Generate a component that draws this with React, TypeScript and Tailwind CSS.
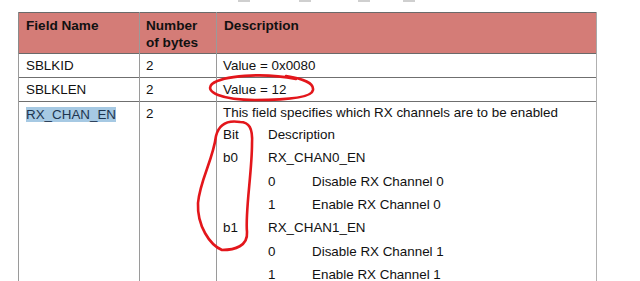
const rowLine = 'border-b border-[#6f6f6f]';
const vLine = 'border-l border-[#9a9a9a]';

const bitRows = [
  { bit: 'Bit', val: 'Description', desc: '' },
  { bit: 'b0', val: 'RX_CHAN0_EN', desc: '' },
  { bit: '', val: '0', desc: 'Disable RX Channel 0' },
  { bit: '', val: '1', desc: 'Enable RX Channel 0' },
  { bit: 'b1', val: 'RX_CHAN1_EN', desc: '' },
  { bit: '', val: '0', desc: 'Disable RX Channel 1' },
  { bit: '', val: '1', desc: 'Enable RX Channel 1' },
];

function Annotations() {
  return (
    <svg
      className="pointer-events-none absolute left-0 top-0"
      width="640"
      height="281"
      viewBox="0 0 640 281"
      fill="none"
      stroke="#e3161b"
      strokeWidth="2.6"
      strokeLinecap="round"
    >
      <path d="M 296 79 C 262 72, 222 76, 212 84 C 204 92, 222 100, 255 100 C 286 100, 312 98, 313 90 C 314 83, 304 79, 286 76" />
      <path d="M 240 122 C 228 120, 219 124, 216 136 C 213 160, 200 180, 198 203 C 197 226, 210 245, 222 250 C 235 250, 248 246, 247 232 C 245 212, 252 172, 252 144 C 253 128, 249 122, 240 122" />
    </svg>
  );
}

export default function App() {
  return (
    <div
      className="relative h-[281px] w-[640px] overflow-hidden bg-white text-[13.4px] text-[#111]"
      style={{ fontFamily: '"Liberation Sans", Arial, sans-serif' }}
    >
      <div className="flex h-[12px] items-start">
        <div className="ml-[238px] h-[2px] w-[12px] bg-[#cfcfcf]" />
        <div className="ml-[49px] h-[2px] w-[12px] bg-[#cfcfcf]" />
        <div className="ml-[47px] h-[2px] w-[12px] bg-[#cfcfcf]" />
        <div className="ml-[33px] h-[2px] w-[12px] bg-[#cfcfcf]" />
      </div>

      <table className="ml-[18px] w-[579px] table-fixed border-collapse">
        <colgroup>
          <col className="w-[121px]" />
          <col className="w-[77px]" />
          <col />
        </colgroup>
        <thead>
          <tr className="h-[41px] border-y border-[#6a6a6a] bg-[#d47c77] align-top text-[13.6px] font-bold leading-[17px]">
            <th className="border-l border-[#8a8a8a] px-[7px] pt-[4px] text-left">Field Name</th>
            <th className={`${vLine} px-[6px] pt-[4px] text-left`}>
              Number
              <br />
              of bytes
            </th>
            <th className={`${vLine} border-r border-r-[#a8a8a8] px-[7px] pt-[4px] text-left`}>Description</th>
          </tr>
        </thead>
        <tbody className="leading-[23px]">
          <tr className={rowLine}>
            <td className={`${vLine} px-[7px]`}>SBLKID</td>
            <td className={`${vLine} px-[6px]`}>2</td>
            <td className={`${vLine} border-r border-r-[#b0b0b0] px-[6px]`}>Value = 0x0080</td>
          </tr>
          <tr className={rowLine}>
            <td className={`${vLine} px-[7px]`}>SBLKLEN</td>
            <td className={`${vLine} px-[6px]`}>2</td>
            <td className={`${vLine} border-r border-r-[#b0b0b0] px-[6px]`}>Value = 12</td>
          </tr>
          <tr className="align-top">
            <td className={`${vLine} h-[180px] px-[7px] pt-[5px] leading-[15px]`}>
              <span className="bg-[#a6c9e3] text-[#1d3550]">RX_CHAN_EN</span>
            </td>
            <td className={`${vLine} px-[6px] pt-[1px] leading-[21px]`}>2</td>
            <td className={`${vLine} border-r border-r-[#b0b0b0] px-[6px]`}>
              <div className="h-[21px] leading-[21px]">This field specifies which RX channels are to be enabled</div>
              {bitRows.map((r, i) => (
                <div key={i} className="flex h-[23.3px] items-center last:h-[18px] last:items-start">
                  <span className="w-[45px] shrink-0">{r.bit}</span>
                  <span className="w-[44px] shrink-0 whitespace-nowrap">{r.val}</span>
                  <span>{r.desc}</span>
                </div>
              ))}
            </td>
          </tr>
        </tbody>
      </table>

      <Annotations />
    </div>
  );
}
